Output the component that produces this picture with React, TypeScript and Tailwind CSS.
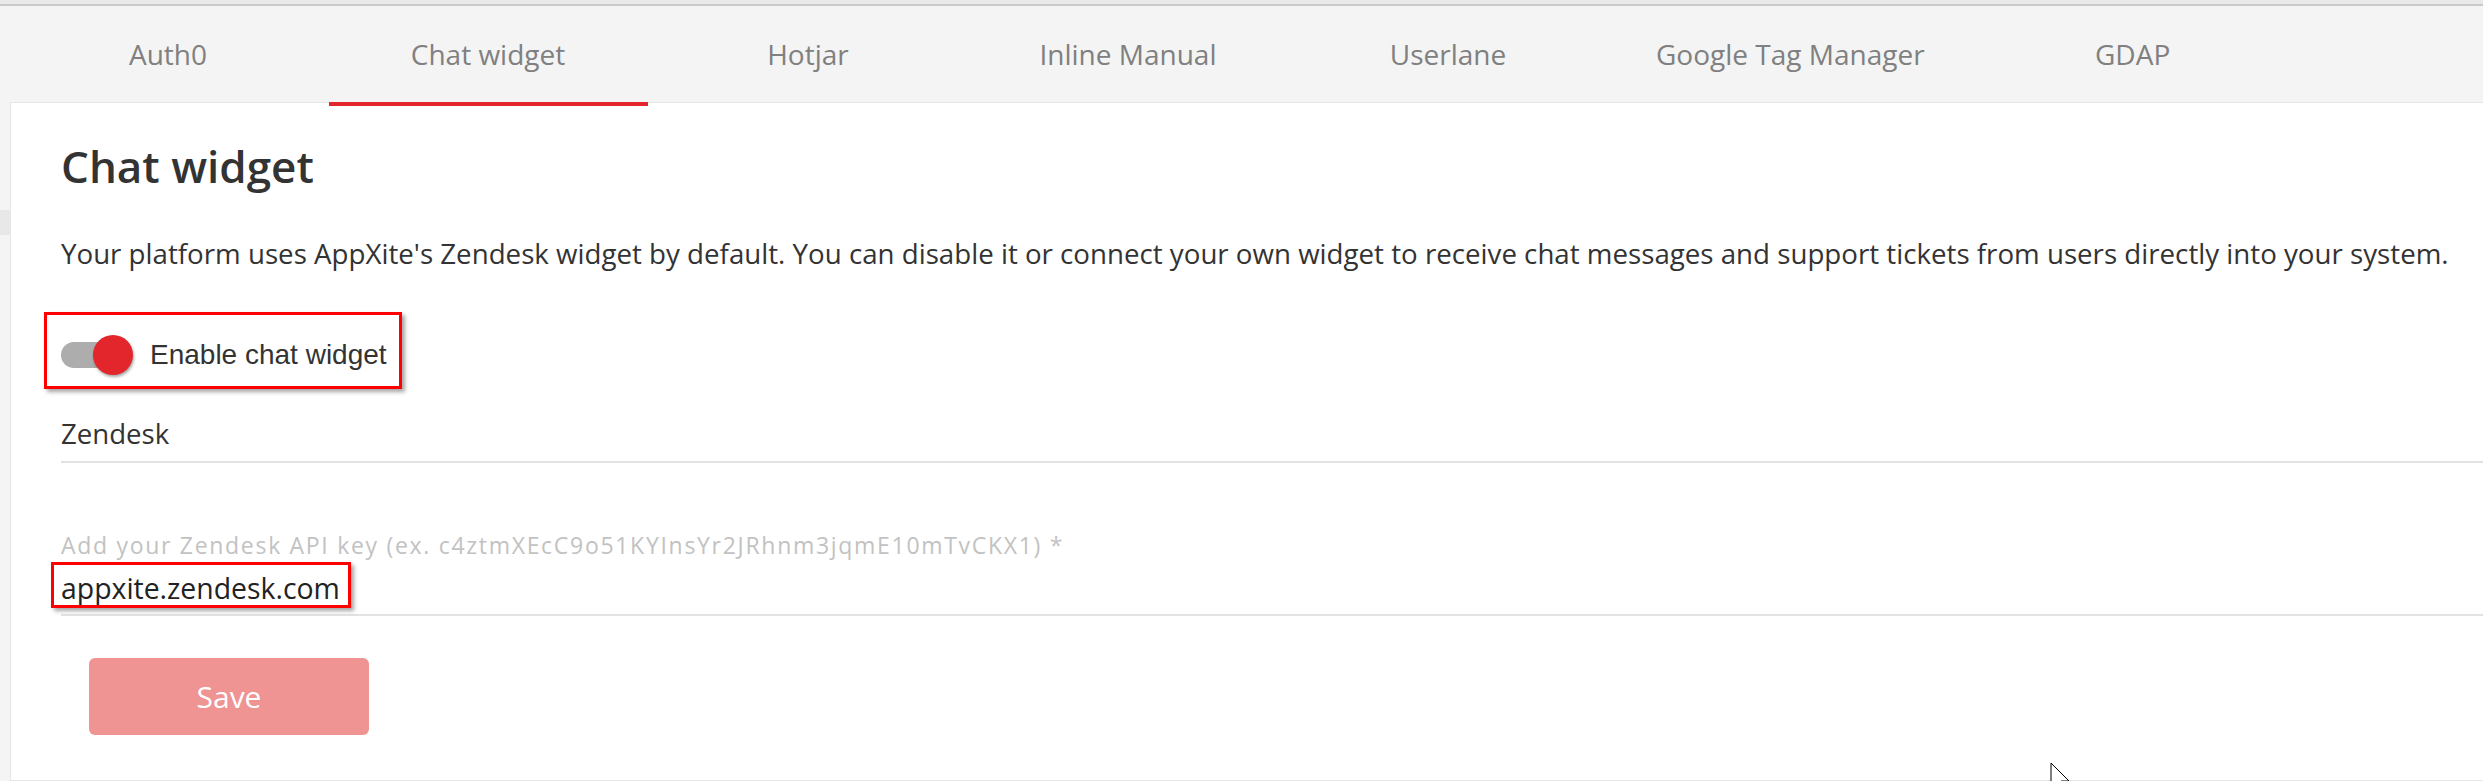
import React from "react";

const tabs = [
  "Auth0",
  "Chat widget",
  "Hotjar",
  "Inline Manual",
  "Userlane",
  "Google Tag Manager",
  "GDAP",
];

export default function App() {
  return (
    <div className="relative w-[2483px] h-[781px] overflow-hidden bg-[#f4f4f4] font-['Open_Sans',sans-serif]">
      {/* top strip */}
      <div className="h-[4px] bg-[#e9e9e9]" />
      <div className="h-[2px] bg-[#c9c9c9]" />

      {/* tabs */}
      <div className="flex h-[96px] pl-[8px]">
        {tabs.map((t) => (
          <div
            key={t}
            className="relative z-10 flex min-w-[320px] px-[48px] items-center justify-center whitespace-nowrap text-[28px] text-[#808080]"
          >
            {t}
            {t === "Chat widget" && (
              <span className="absolute left-[1px] right-0 bottom-[-4px] h-[4px] bg-[#e3262b]" />
            )}
          </div>
        ))}
      </div>

      <div className="flex">
        {/* left gutter */}
        <div className="w-[10px] shrink-0 pt-[108px]">
          <div className="h-[25px] bg-[#e8e8e8]" />
        </div>

        {/* card */}
        <div className="flex-1 h-[679px] bg-white border-l border-t border-b border-[#e6e6e6] pl-[50px] pt-[38px]">
          <h1 className="text-[44px] leading-[50px] font-semibold text-[#333]">
            Chat widget
          </h1>
          <p className="mt-[44px] text-[27.7px] leading-[36px] text-[#333] whitespace-nowrap">
            Your platform uses AppXite's Zendesk widget by default. You can
            disable it or connect your own widget to receive chat messages and
            support tickets from users directly into your system.
          </p>

          {/* toggle row */}
          <div className="mt-[41px] -ml-[17px] w-[358px] h-[77px] border-[3px] border-[#ff0000] shadow-[3px_3px_4px_rgba(0,0,0,0.35)] pl-[14px] pt-[20px]">
            <div className="flex items-center">
              <div className="relative w-[72px] h-[40px] shrink-0">
                <div className="absolute left-0 top-[7px] w-[60px] h-[26px] rounded-full bg-[#adadad]" />
                <div className="absolute left-[32px] top-0 w-[40px] h-[40px] rounded-full bg-[#e3262b] shadow-[1px_2px_3px_rgba(0,0,0,0.35)]" />
              </div>
              <span className="ml-[17px] font-['Liberation_Sans',Arial,sans-serif] text-[28px] leading-[40px] text-[#333]">
                Enable chat widget
              </span>
            </div>
          </div>

          {/* provider select */}
          <div className="mt-[26px] pb-[10px] border-b-2 border-[#e2e2e2] text-[27.6px] leading-[36px] text-[#333]">
            Zendesk
          </div>

          {/* api key input */}
          <div className="mt-[67px] text-[23px] leading-[30px] tracking-[1.7px] text-[#c2c2c2] whitespace-nowrap">
            Add your Zendesk API key (ex. c4ztmXEcC9o51KYInsYr2JRhnm3jqmE10mTvCKX1) *
          </div>
          <div className="relative mt-[10px] pb-[8px] border-b-2 border-[#e2e2e2] text-[28.4px] leading-[36px] text-[#222]">
            appxite.zendesk.com
            <div className="absolute left-[-10px] top-[-8px] w-[300px] h-[46px] border-[3px] border-[#ff0000] shadow-[3px_3px_4px_rgba(0,0,0,0.35)]" />
          </div>

          <button className="mt-[42px] ml-[28px] w-[280px] h-[77px] rounded-[6px] bg-[#f09393] text-[30px] text-white">
            Save
          </button>
        </div>
      </div>

      {/* mouse cursor */}
      <svg
        className="absolute left-[2050px] top-[762px]"
        width="20"
        height="30"
        viewBox="0 0 20 30"
      >
        <path d="M1 1 L1 26 L7 20 L11 29 L15 27 L11 19 L19 19 Z" fill="white" stroke="black" strokeWidth="1" />
      </svg>
    </div>
  );
}
